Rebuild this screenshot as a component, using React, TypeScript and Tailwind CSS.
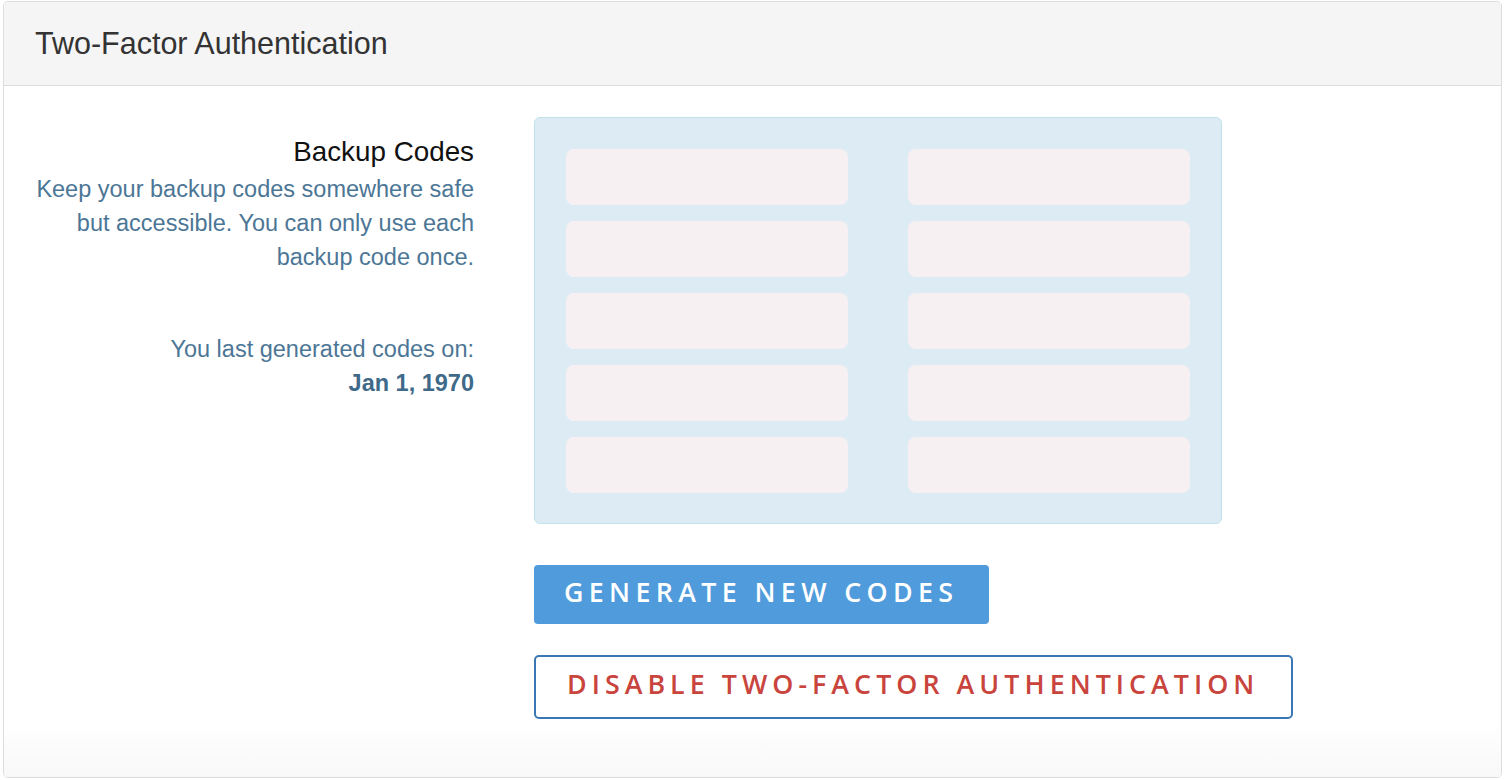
const codes = Array.from({ length: 10 }, (_, i) => i);

const BackupCodesInfo = () => {
  return (
    <div className="w-[470px] shrink-0 pt-[16px] text-right font-['Liberation_Sans',Arial,sans-serif]">
      <h3 className="text-[27.8px] leading-[38px] text-[#111] font-normal">
        Backup Codes
      </h3>
      <p className="mt-px text-[23.5px] leading-[34px] font-light text-[#4c7696]">
        Keep your backup codes somewhere safe
        <br />
        but accessible. You can only use each
        <br />
        backup code once.
      </p>
      <p className="mt-[58px] text-[23.5px] leading-[34px] text-[#4c7696]">
        You last generated codes on:
        <br />
        <strong className="font-bold text-[#3f6a8a]">Jan 1, 1970</strong>
      </p>
    </div>
  );
};

const CodesPanel = () => {
  return (
    <div className="flex flex-col items-start">
      <div className="w-[688px] h-[407px] border border-[#bfe2ec] bg-[#dcebf4] rounded-[6px] p-[31px]">
        <div className="grid grid-cols-2 gap-x-[60px] gap-y-[16px]">
          {codes.map((c) => (
            <div key={c} className="h-[56px] rounded-[8px] bg-[#f6f0f3]" />
          ))}
        </div>
      </div>

      <button className="mt-[41px] w-[455px] h-[59px] bg-[#4f9bdb] rounded-[4px] pl-[30px] pb-[5px] text-left text-white text-[26.8px] font-semibold tracking-[0.2em] font-['Open_Sans',sans-serif]">
        GENERATE NEW CODES
      </button>

      <button className="mt-[31px] w-[759px] h-[64px] border-2 border-[#3a77b4] rounded-[5px] pl-[31px] pb-[6px] text-left text-[#c9443c] text-[26.8px] font-semibold tracking-[0.188em] font-['Open_Sans',sans-serif]">
        DISABLE TWO-FACTOR AUTHENTICATION
      </button>
    </div>
  );
};

export default function App() {
  return (
    <div className="w-full h-[780px] bg-white pt-px pl-[3px] pr-[2px]">
      <div className="h-[777px] flex flex-col border border-[#ddd] rounded-[5px] overflow-hidden">
        <div className="h-[84px] shrink-0 flex items-center px-[31px] bg-[#f5f5f5] border-b border-[#ddd]">
          <h2 className="text-[30.5px] text-[#333] font-['Liberation_Sans',Arial,sans-serif]">
            Two-Factor Authentication
          </h2>
        </div>

        <div className="flex-1 flex gap-[60px] pt-[31px] bg-linear-to-b from-white from-[92%] to-[#f8f8f8]">
          <BackupCodesInfo />
          <CodesPanel />
        </div>
      </div>
    </div>
  );
}
